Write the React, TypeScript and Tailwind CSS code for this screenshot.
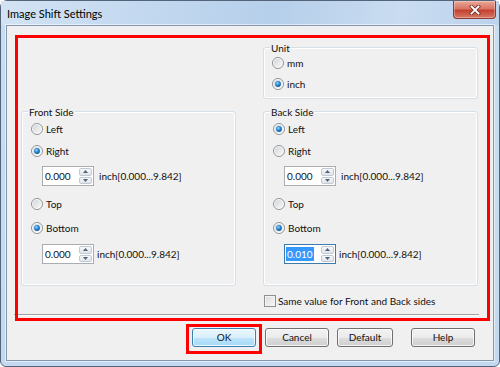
import React from "react";

function Radio({ checked }: { checked?: boolean }) {
  return (
    <svg width="12" height="12" viewBox="0 0 12 12" className="shrink-0">
      <defs>
        <linearGradient id="rbg" x1="0" y1="0" x2="1" y2="1">
          <stop offset="0" stopColor="#d2d4d6" />
          <stop offset="1" stopColor="#f9f9f9" />
        </linearGradient>
        <radialGradient id="rdot" cx="0.4" cy="0.35" r="0.75">
          <stop offset="0" stopColor="#9adcff" />
          <stop offset="0.45" stopColor="#2a89d8" />
          <stop offset="1" stopColor="#0b4a8a" />
        </radialGradient>
      </defs>
      <circle cx="6" cy="6" r="5.5" fill="#ffffff" stroke="#8c9196" />
      <circle cx="6" cy="6" r="4.3" fill="url(#rbg)" />
      {checked && <circle cx="6" cy="6" r="2.9" fill="url(#rdot)" />}
    </svg>
  );
}

function RadioRow({ label, checked, className }: { label: string; checked?: boolean; className?: string }) {
  return (
    <div className={`flex h-[20px] items-center gap-[3px] ${className ?? ""}`}>
      <Radio checked={checked} />
      <span>{label}</span>
    </div>
  );
}

function SpinArrow({ up }: { up?: boolean }) {
  return (
    <div className="flex flex-1 items-center justify-center rounded-[2px] border border-[#c2c9d2] bg-[linear-gradient(#f7f7f7,#e1e4e8)]">
      <svg width="5" height="3" viewBox="0 0 5 3">
        <path d={up ? "M0 3 L2.5 0 L5 3 Z" : "M0 0 L5 0 L2.5 3 Z"} fill="#4d6185" />
      </svg>
    </div>
  );
}

function Spinner({ value, selected, textGap }: { value: string; selected?: boolean; textGap: string }) {
  return (
    <div className="flex h-[20px] items-center">
      <div className={`flex h-full w-[52px] border bg-white ${selected ? "border-[#3d7bad]" : "border-[#abadb3]"}`}>
        <div className="flex flex-1 items-center pl-[1px]">
          <span className={`px-[1px] leading-[14px] ${selected ? "bg-[#3399ff] text-white" : ""}`}>{value}</span>
        </div>
        <div className="flex w-[14px] flex-col gap-[1px] py-[1px] pr-[1px]">
          <SpinArrow up />
          <SpinArrow />
        </div>
      </div>
      <span className={textGap}>inch[0.000...9.842]</span>
    </div>
  );
}

function Group({ title, className, children }: { title: string; className?: string; children: React.ReactNode }) {
  return (
    <div className={`relative flex flex-col rounded-[3px] border border-[#d5dfe5] shadow-[inset_0_0_0_1px_#ffffff] ${className ?? ""}`}>
      <span className="absolute -top-[7px] left-[6px] bg-[#f0f0f0] px-[1px] leading-[14px]">{title}</span>
      {children}
    </div>
  );
}

function SideGroup({ title, first, secondSelected }: { title: string; first: "left" | "right"; secondSelected?: boolean }) {
  return (
    <Group title={title} className="h-[175px] pl-[9px] pt-[7px]">
      <RadioRow label="Left" checked={first === "left"} />
      <RadioRow label="Right" checked={first === "right"} className="mt-[2px]" />
      <div className="ml-[11px] mt-[5px]">
        <Spinner value="0.000" textGap="ml-[5px]" />
      </div>
      <RadioRow label="Top" className="mt-[8px]" />
      <RadioRow label="Bottom" checked className="mt-[4px]" />
      <div className="ml-[11px] mt-[6px]">
        <Spinner value={secondSelected ? "0.010" : "0.000"} selected={secondSelected} textGap="ml-[3px]" />
      </div>
    </Group>
  );
}

function Button({ label, width, primary }: { label: string; width: string; primary?: boolean }) {
  return (
    <div
      className={`flex h-[19px] ${width} items-center justify-center rounded-[3px] border shadow-[inset_0_0_0_1px_rgba(255,255,255,0.75)] ${
        primary
          ? "border-[#3c7fb1] bg-[linear-gradient(#eaf6fd_0%,#d9f0fc_50%,#bee6fd_51%,#a7d9f5_100%)]"
          : "border-[#707070] bg-[linear-gradient(#f2f2f2_0%,#ebebeb_50%,#dddddd_51%,#cfcfcf_100%)]"
      }`}
    >
      {label}
    </div>
  );
}

function CloseButton() {
  return (
    <div className="ml-auto mr-[3px] flex h-[18px] w-[43px] items-center justify-center rounded-b-[4px] border border-t-0 border-[#8d3a30] bg-[linear-gradient(#eaa898,#d97563_45%,#c4402f_55%,#d77a67_100%)] shadow-[inset_0_0_0_1px_rgba(255,255,255,0.3)]">
      <svg width="12" height="10" viewBox="0 0 12 10">
        <path d="M2.5 1.5 L9.5 8.5 M9.5 1.5 L2.5 8.5" stroke="#6b2a22" strokeWidth="3.4" strokeLinecap="square" />
        <path d="M2.5 1.5 L9.5 8.5 M9.5 1.5 L2.5 8.5" stroke="#ffffff" strokeWidth="1.9" strokeLinecap="square" />
      </svg>
    </div>
  );
}

export default function App() {
  return (
    <div className="relative flex h-[367px] w-[500px] flex-col rounded-t-[7px] rounded-b-[6px] border border-[#54657a] bg-[linear-gradient(180deg,#bfd5ed_0%,#c9ddf2_8%,#c4d9ef_100%)] px-[5px] pb-[5px] font-['Lato','Liberation_Sans',sans-serif] text-[10px] text-[#111]">
      <div className="-mx-[5px] flex h-[24px] items-start bg-[linear-gradient(100deg,#d3e3f4_0%,#c2d8ef_30%,#b6cfea_55%,#c9dcf1_80%,#bcd3ec_100%)]">
        <span className="ml-[6px] mt-[5px] text-[11px] text-black">Image Shift Settings</span>
        <CloseButton />
      </div>

      <div className="flex flex-1 flex-col border border-[#8598b0] bg-[#f0f0f0] shadow-[0_0_0_1px_rgba(255,255,255,0.55)]">
        <div className="grid grid-cols-[215px_215px] gap-x-[27px] gap-y-[12px] px-[14px] pt-[21px]">
          <Group title="Unit" className="col-start-2 h-[52px] pl-[8px] pt-[5px]">
            <RadioRow label="mm" />
            <RadioRow label="inch" checked className="mt-[1px]" />
          </Group>
          <div className="col-start-1">
            <SideGroup title="Front Side" first="right" />
          </div>
          <div className="col-start-2">
            <SideGroup title="Back Side" first="left" secondSelected />
          </div>
        </div>

        <div className="mt-[8px] flex h-[14px] items-center gap-[2px] pl-[257px]">
          <div className="h-[12px] w-[12px] border border-[#8e8f8f] bg-[linear-gradient(135deg,#d9dbdd,#f7f7f7)] shadow-[inset_0_0_0_1px_#f4f4f4]" />
          <span>Same value for Front and Back sides</span>
        </div>

        <div className="ml-[7px] mr-[14px] mt-[6px] border-t border-b border-t-[#a0a0a0] border-b-white" />

        <div className="mt-[12px] flex pl-[185px]">
          <Button label="OK" width="w-[64px]" primary />
          <div className="ml-[9px]">
            <Button label="Cancel" width="w-[64px]" />
          </div>
          <div className="ml-[8px]">
            <Button label="Default" width="w-[56px]" />
          </div>
          <div className="ml-[18px]">
            <Button label="Help" width="w-[64px]" />
          </div>
        </div>
      </div>

      <div className="pointer-events-none absolute left-[14px] top-[34px] h-[286px] w-[475px] border-[3px] border-[#ff0000]" />
      <div className="pointer-events-none absolute left-[185px] top-[323px] h-[30px] w-[76px] border-[3px] border-[#ff0000]" />
    </div>
  );
}
